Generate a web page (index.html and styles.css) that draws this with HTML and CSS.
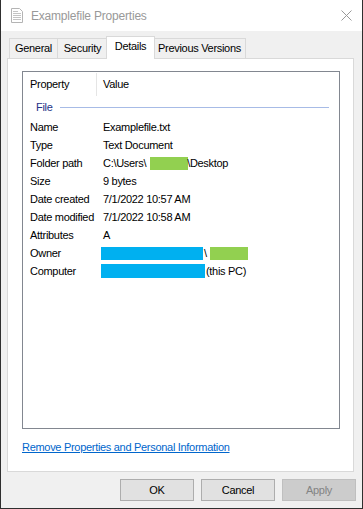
FILE: index.html
```html
<!DOCTYPE html>
<html>
<head>
<meta charset="utf-8">
<link rel="stylesheet" href="styles.css">
</head>
<body>
<div class="window">
  <div class="titlebar">
    <svg class="ticon" width="12" height="15" viewBox="0 0 12 15">
      <path d="M0.5 0.5 H8.5 L11.5 3.5 V14.5 H0.5 Z" fill="#fff" stroke="#b4b4b4"/>
      <path d="M2 3.5 H7 M2 5.5 H10 M2 7.5 H10 M2 9.5 H10 M2 11.5 H10" stroke="#c4c4c4"/>
    </svg>
    <span class="title">Examplefile Properties</span>
    <svg class="close" width="11" height="11" viewBox="0 0 11 11">
      <path d="M0.5 0.5 L10.5 10.5 M10.5 0.5 L0.5 10.5" stroke="#999" stroke-width="1"/>
    </svg>
  </div>
  <div class="body">
    <div class="tabs">
      <div class="tab t-general">General</div>
      <div class="tab t-security">Security</div>
      <div class="tab active t-details">Details</div>
      <div class="tab t-prev">Previous Versions</div>
    </div>
    <div class="panel">
      <div class="list">
        <div class="head">
          <div class="hcol prop">Property</div>
          <div class="hcol val">Value</div>
        </div>
        <div class="group"><span class="gname">File</span><span class="gline"></span></div>
        <div class="row"><span class="k">Name</span><span class="v">Examplefile.txt</span></div>
        <div class="row"><span class="k">Type</span><span class="v">Text Document</span></div>
        <div class="row"><span class="k">Folder path</span><span class="v">C:\Users\<span class="green g-user"></span>\Desktop</span></div>
        <div class="row"><span class="k">Size</span><span class="v">9 bytes</span></div>
        <div class="row"><span class="k">Date created</span><span class="v">7/1/2022 10:57 AM</span></div>
        <div class="row"><span class="k">Date modified</span><span class="v">7/1/2022 10:58 AM</span></div>
        <div class="row"><span class="k">Attributes</span><span class="v">A</span></div>
        <div class="row"><span class="k">Owner</span><span class="v"><span class="blue b-owner"></span>\<span class="green g-owner"></span></span></div>
        <div class="row"><span class="k">Computer</span><span class="v"><span class="blue b-comp"></span>(this PC)</span></div>
      </div>
      <a class="link" href="#">Remove Properties and Personal Information</a>
    </div>
    <div class="buttons">
      <div class="btn">OK</div>
      <div class="btn">Cancel</div>
      <div class="btn disabled">Apply</div>
    </div>
  </div>
</div>
</body>
</html>
```
FILE: styles.css
```css
* { box-sizing: border-box; }
html, body { margin: 0; padding: 0; background: #f0f0f0; }
body {
  font-family: "Liberation Sans", Arial, sans-serif;
  font-size: 11px;
  letter-spacing: -0.3px;
  color: #000;
}
.window {
  width: 363px;
  height: 509px;
  border: 1px solid #2f2f2f;
  border-top: none;
  display: flex;
  flex-direction: column;
  background: #f0f0f0;
}
.titlebar {
  height: 31px;
  background: #fff;
  display: flex;
  align-items: center;
  padding-left: 10px;
  padding-right: 10px;
  flex: none;
}
.title {
  margin-left: 8px;
  font-size: 12px;
  letter-spacing: -0.2px;
  color: #999;
  flex: 1;
}
.body {
  flex: 1;
  padding: 5px 8px 0 6px;
  display: flex;
  flex-direction: column;
}
.tabs {
  height: 22px;
  display: flex;
  align-items: flex-end;
  padding-left: 2px;
}
.tab {
  height: 20px;
  border: 1px solid #d9d9d9;
  border-bottom: none;
  background: #f0f0f0;
  text-align: center;
  line-height: 19px;
  margin-right: -1px;
}
.t-general { width: 49px; }
.t-security { width: 51px; margin-right: -2px; }
.t-details { width: 49px; margin-right: -2px; }
.t-prev { width: 93px; }
.tab.active {
  height: 23px;
  background: #fff;
  margin-bottom: -1px;
  position: relative;
  z-index: 1;
  line-height: 19px;
}
.panel {
  height: 414px;
  background: #fff;
  border: 1px solid #d9d9d9;
  padding: 12px 0 0 14px;
}
.list {
  width: 318px;
  height: 358px;
  border: 1px solid #828790;
  background: #fff;
}
.head {
  height: 24px;
  display: flex;
  align-items: stretch;
}
.hcol { line-height: 24px; }
.prop {
  width: 74px;
  padding-left: 7px;
  border-right: 1px solid #e5e5e5;
  margin-top: 1px;
  line-height: 22px;
}
.val { padding-left: 6px; }
.group {
  height: 22px;
  display: flex;
  align-items: center;
  padding-left: 13px;
  padding-right: 10px;
}
.gname { color: #1e3287; }
.gline {
  flex: 1;
  height: 1px;
  background: #a7bbe6;
  margin-left: 7px;
}
.row {
  height: 18px;
  line-height: 18px;
  display: flex;
  white-space: nowrap;
}
.k { width: 80px; padding-left: 7px; flex: none; }
.v { display: flex; align-items: center; }
.green, .blue { display: inline-block; height: 13px; }
.green { background: #92d050; }
.blue { background: #00b0f0; }
.g-user { width: 38px; margin-left: 4px; margin-right: -1px; }
.b-owner { width: 102px; margin-left: -2px; margin-right: 1px; }
.g-owner { width: 38px; margin-left: 3px; }
.b-comp { width: 104px; margin-left: -2px; height: 14px; margin-right: 1px; }
.link {
  display: inline-block;
  margin-top: 12px;
  color: #0066cc;
  text-decoration: underline;
  line-height: 13px;
  font-size: 11px;
}
.buttons {
  display: flex;
  justify-content: flex-end;
  gap: 7px;
  margin-top: 7px;
  margin-right: -2px;
}
.btn {
  width: 74px;
  height: 22px;
  border: 1px solid #adadad;
  background: #e1e1e1;
  text-align: center;
  line-height: 20px;
}
.btn.disabled {
  background: #cccccc;
  border-color: #bfbfbf;
  color: #838383;
}
```
